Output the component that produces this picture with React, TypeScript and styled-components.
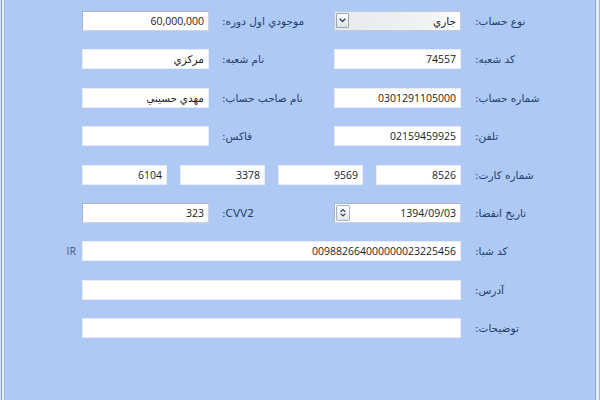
import React, { FC } from "react";
import styled, { createGlobalStyle } from "styled-components";

const GlobalStyle = createGlobalStyle`
  html, body {
    margin: 0;
    padding: 0;
    background: #aec9f4;
  }
`;

const Frame = styled.div`
  width: 600px;
  height: 400px;
  background: #aec9f4;
  box-sizing: border-box;
  overflow: hidden;
  box-shadow:
    inset 1px 0 0 #d3e1f6,
    inset 2px 0 0 #8fa2bf,
    inset 4px 0 0 #e6eefa,
    inset 5px 0 0 #a4bbdd,
    inset -1px 0 0 #a9b6c8,
    inset -4px 0 0 #e3edfa,
    inset -5px 0 0 #98a8c0;
`;

const Form = styled.div`
  direction: rtl;
  display: grid;
  grid-template-columns: 109px 127px 125px 127px 30px;
  grid-auto-rows: 20px;
  row-gap: 18.4px;
  justify-content: start;
  padding: 11px 30px 0 0;
`;

const Label = styled.div<{ $inset?: number }>`
  font-family: "DejaVu Sans", sans-serif;
  font-size: 10.5px;
  color: #24406c;
  display: flex;
  align-items: center;
  justify-content: flex-end;
  padding-left: ${(p) => p.$inset ?? 14}px;
  white-space: nowrap;
`;

const Prefix = styled.div`
  font-family: "Open Sans", "DejaVu Sans", sans-serif;
  font-size: 10.5px;
  color: #3a5c95;
  display: flex;
  align-items: center;
  padding-right: 6px;
`;

const Box = styled.div<{ $framed?: boolean; $span?: boolean }>`
  grid-column: ${(p) => (p.$span ? "2 / 5" : "auto")};
  position: relative;
  box-sizing: border-box;
  height: 20px;
  background: #ffffff;
  border: 1px solid ${(p) => (p.$framed ? "#cbd4e1" : "#e6eefa")};
  border-top-color: ${(p) => (p.$framed ? "#a9b5c7" : "#e6eefa")};
  border-left-color: ${(p) => (p.$framed ? "#a9b5c7" : "#e6eefa")};
  display: flex;
  align-items: center;
  padding: 0 4px;
  font-family: "Open Sans", "DejaVu Sans", sans-serif;
  font-size: 10.5px;
  color: #1c1c1c;
  white-space: nowrap;
  flex: ${(p) => (p.$span ? "none" : "1")};
`;

const Combo = styled(Box)`
  background: linear-gradient(to left, #ffffff 0%, #f1f2f4 25%, #e7e9ed 100%);
  border-color: #c3cbd8;
`;

const DropButton = styled.div`
  position: absolute;
  left: 1px;
  top: 1px;
  width: 13px;
  height: 15px;
  box-sizing: border-box;
  border: 1px solid #98a6ba;
  border-radius: 1px;
  background: linear-gradient(#fbfcfd, #dfe4ea);
  display: flex;
  align-items: center;
  justify-content: center;
`;

const Spinner = styled.div`
  position: absolute;
  left: 1px;
  top: 1px;
  width: 14px;
  height: 16px;
  box-sizing: border-box;
  border: 1px solid #a3b0c2;
  border-radius: 2px;
  background: linear-gradient(#fdfdfe, #e3e7ed);
  display: flex;
  flex-direction: column;
  align-items: center;
  justify-content: center;
  gap: 1px;
`;

const CardGroup = styled.div`
  grid-column: 2 / 5;
  display: flex;
  gap: 13px;
`;

const Chevron: FC<{ up?: boolean; size?: number }> = ({ up, size = 7 }) => (
  <svg width={size} height={size * 0.6} viewBox="0 0 10 6">
    <path
      d={up ? "M1 5 L5 1 L9 5" : "M1 1 L5 5 L9 1"}
      fill="none"
      stroke="#2f4466"
      strokeWidth="2"
    />
  </svg>
);

const App: FC = () => {
  return (
    <>
      <GlobalStyle />
      <Frame>
        <Form>
          <Label>نوع حساب:</Label>
          <Combo $framed>
            جاري
            <DropButton>
              <Chevron size={7} />
            </DropButton>
          </Combo>
          <Label $inset={13}>موجودي اول دوره:</Label>
          <Box $framed>60,000,000</Box>
          <span />

          <Label>کد شعبه:</Label>
          <Box>74557</Box>
          <Label $inset={13}>نام شعبه:</Label>
          <Box>مرکزي</Box>
          <span />

          <Label>شماره حساب:</Label>
          <Box>0301291105000</Box>
          <Label $inset={13}>نام صاحب حساب:</Label>
          <Box>مهدي حسيني</Box>
          <span />

          <Label>تلفن:</Label>
          <Box>02159459925</Box>
          <Label $inset={13}>فاکس:</Label>
          <Box />
          <span />

          <Label>شماره کارت:</Label>
          <CardGroup>
            <Box>8526</Box>
            <Box>9569</Box>
            <Box>3378</Box>
            <Box>6104</Box>
          </CardGroup>
          <span />

          <Label>تاریخ انقضا:</Label>
          <Box $framed>
            1394/09/03
            <Spinner>
              <Chevron up size={6} />
              <Chevron size={6} />
            </Spinner>
          </Box>
          <Label $inset={13}>CVV2:</Label>
          <Box $framed>323</Box>
          <span />

          <Label>کد شبا:</Label>
          <Box $span>009882664000000023225456</Box>
          <Prefix>IR</Prefix>

          <Label>آدرس:</Label>
          <Box $span />
          <span />

          <Label>توضیحات:</Label>
          <Box $span />
          <span />
        </Form>
      </Frame>
    </>
  );
};

export default App;
